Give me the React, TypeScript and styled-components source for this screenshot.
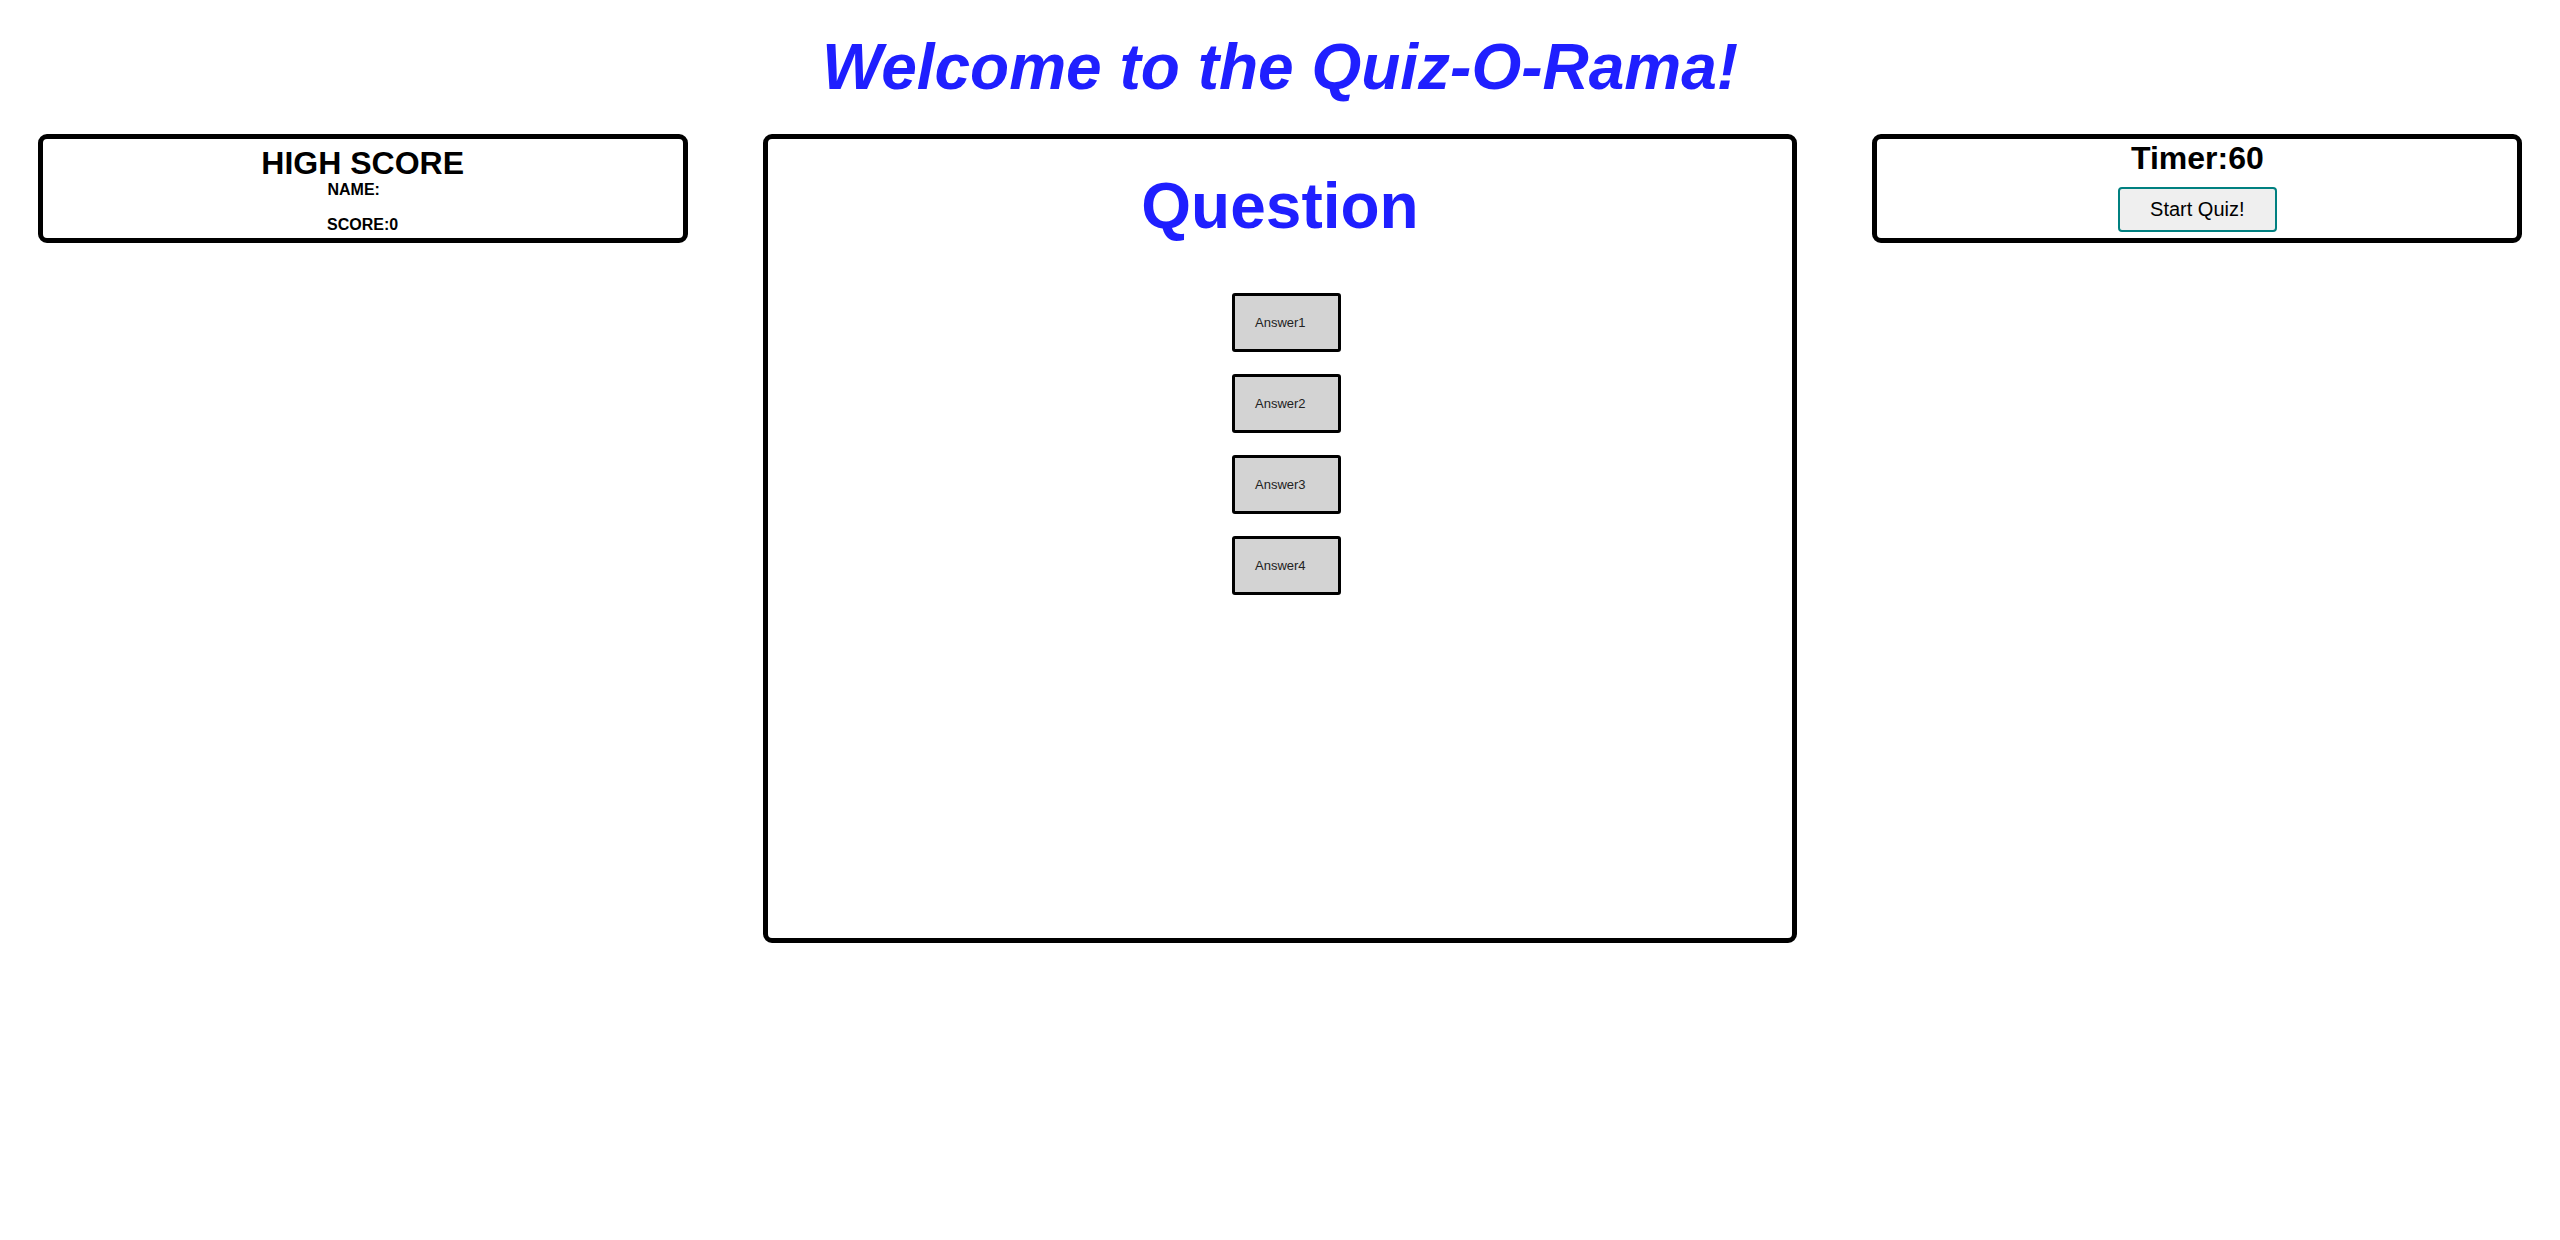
import React from "react";
import styled, { createGlobalStyle } from "styled-components";

const GlobalStyle = createGlobalStyle`
  html, body {
    margin: 0;
    padding: 0;
    background: #ffffff;
  }
  body {
    font-family: "Liberation Sans", Arial, Helvetica, sans-serif;
    color: #000000;
  }
`;

const Page = styled.div`
  display: flex;
  flex-direction: column;
  width: 100%;
`;

const Title = styled.h1`
  margin: 0;
  padding: 31px 0 31px;
  font-size: 64px;
  line-height: 72px;
  font-weight: 700;
  font-style: italic;
  color: #1f1fff;
  text-align: center;
`;

const Row = styled.main`
  display: flex;
  justify-content: space-around;
  align-items: flex-start;
`;

const Panel = styled.section<{ $wide?: boolean; $h: number; $pt: number }>`
  box-sizing: content-box;
  width: ${(p) => (p.$wide ? "40%" : "25%")};
  height: ${(p) => p.$h}px;
  padding-top: ${(p) => p.$pt}px;
  border: 5px solid #000000;
  border-radius: 9px;
  display: flex;
  flex-direction: column;
  align-items: center;
  overflow: hidden;
`;

const PanelHeading = styled.h2`
  margin: 0;
  font-size: 32px;
  line-height: 36px;
  font-weight: 700;
  color: #000000;
  text-align: center;
`;

const Stat = styled.p<{ $gap?: number }>`
  margin: 0 0 ${(p) => p.$gap ?? 0}px;
  font-size: 16px;
  line-height: 18px;
  font-weight: 700;
  text-align: center;
`;

const NameValue = styled.span`
  display: inline-block;
  width: 18px;
`;

const StartButton = styled.button`
  margin-top: 11px;
  padding: 9px 30px;
  font-family: "Liberation Sans", Arial, Helvetica, sans-serif;
  font-size: 20px;
  line-height: 23px;
  color: #000000;
  background: #efefef;
  border: 2px solid #008080;
  border-radius: 4px;
  cursor: pointer;
`;

const QuestionText = styled.h2`
  margin: 0;
  font-size: 64px;
  line-height: 72px;
  font-weight: 700;
  color: #1f1fff;
  text-align: center;
`;

const AnswerList = styled.div`
  display: flex;
  flex-direction: column;
  align-items: center;
  gap: 22px;
  margin-top: 51px;
  padding-left: 13px;
`;

const AnswerButton = styled.button`
  box-sizing: border-box;
  width: 109px;
  height: 59px;
  padding: 0 12px 0 20px;
  font-family: "Liberation Sans", Arial, Helvetica, sans-serif;
  font-size: 13px;
  line-height: 15px;
  color: #222222;
  text-align: left;
  background: #d3d3d3;
  border: 3px solid #000000;
  border-radius: 3px;
  cursor: pointer;
`;

const answers = ["Answer1", "Answer2", "Answer3", "Answer4"];

export default function App() {
  return (
    <>
      <GlobalStyle />
      <Page>
        <Title>Welcome to the Quiz-O-Rama!</Title>
        <Row>
          <Panel $h={93.5} $pt={5.5}>
            <PanelHeading>HIGH SCORE</PanelHeading>
            <Stat $gap={17}>
              NAME:<NameValue />
            </Stat>
            <Stat>SCORE:0</Stat>
          </Panel>
          <Panel $wide $h={768} $pt={31}>
            <QuestionText>Question</QuestionText>
            <AnswerList>
              {answers.map((a) => (
                <AnswerButton key={a}>{a}</AnswerButton>
              ))}
            </AnswerList>
          </Panel>
          <Panel $h={98.5} $pt={0.5}>
            <PanelHeading>Timer:60</PanelHeading>
            <StartButton>Start Quiz!</StartButton>
          </Panel>
        </Row>
      </Page>
    </>
  );
}
